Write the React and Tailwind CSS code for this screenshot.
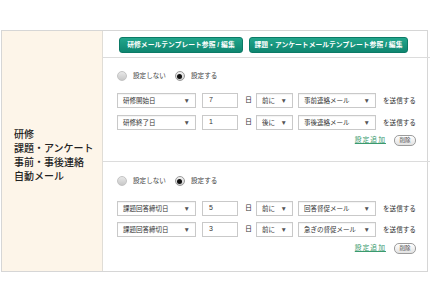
import React from "react";

const font = { fontFamily: '"Liberation Sans", "Noto Sans CJK JP", sans-serif' };

function Radio({ checked }) {
  return checked ? (
    <span className="inline-flex h-[10px] w-[10px] items-center justify-center rounded-full border border-[#9a9a9a] bg-gradient-to-b from-[#f2f2f2] to-[#cfcfcf]">
      <span className="h-[5px] w-[5px] rounded-full bg-[#111]" />
    </span>
  ) : (
    <span className="inline-block h-[10px] w-[10px] rounded-full border border-[#c4c4c4] bg-gradient-to-b from-[#e8e8e8] to-[#c8c8c8]" />
  );
}

function Select({ label, w }) {
  return (
    <div
      className={`flex h-[15px] shrink-0 items-center justify-between whitespace-nowrap border border-[#c9c9c9] bg-white pl-[5px] pr-[5px] text-[6.5px] text-[#333] shadow-[inset_0_1px_1px_rgba(0,0,0,0.05)] ${w}`}
    >
      <span>{label}</span>
      <span className="text-[6.5px] text-[#555]">▼</span>
    </div>
  );
}

function Row({ a, n, b, c }) {
  return (
    <div className="flex h-[15px] items-center whitespace-nowrap">
      <Select label={a} w="w-[79px]" />
      <div className="ml-[6px] flex h-[15px] w-[36px] shrink-0 items-center border border-[#c9c9c9] bg-white pl-[6px] text-[7px] text-[#333]">
        {n}
      </div>
      <span className="ml-[7px] shrink-0 text-[7px] text-[#333]">日</span>
      <div className="ml-[4px] shrink-0">
        <Select label={b} w="w-[37px]" />
      </div>
      <div className="ml-[5px] shrink-0">
        <Select label={c} w="w-[78px]" />
      </div>
      <span className="ml-[7px] shrink-0 text-[6.6px] text-[#333]">を送信する</span>
    </div>
  );
}

function Section({ pt, g1, g2, g3, h, rows }) {
  return (
    <div className={`flex flex-col overflow-hidden pl-[14px] pr-[16px] ${pt} ${h}`}>
      <div className="flex h-[10px] items-center whitespace-nowrap text-[6.6px] text-[#444]">
        <Radio />
        <span className="ml-[6px]">設定しない</span>
        <span className="ml-[9px] flex"><Radio checked /></span>
        <span className="ml-[6px]">設定する</span>
      </div>
      <div className={g1}>
        <Row {...rows[0]} />
      </div>
      <div className={g2}>
        <Row {...rows[1]} />
      </div>
      <div className={`flex h-[11px] items-center justify-end whitespace-nowrap ${g3}`}>
        <span className="text-[6.8px] tracking-[1px] text-[#3a9a6e] underline underline-offset-[1px]">設定追加</span>
        <span className="ml-[8px] flex h-[11px] w-[22px] items-center justify-center rounded-[5px] border border-[#9c9c9c] bg-gradient-to-b from-white to-[#e2e2e2] text-[5.5px] text-[#444]">
          削除
        </span>
      </div>
    </div>
  );
}

export default function App() {
  return (
    <div className="h-[305px] w-[430px] overflow-hidden bg-white" style={font}>
      <div className="ml-[1px] mt-[30px] flex h-[242px] w-[427px] border border-[#d6d6d6]">
        <div className="flex w-[101px] shrink-0 items-center border-r border-[#e0ddd6] bg-[#fdf5e9] pl-[12px] pt-[9px]">
          <div className="text-[10px] font-medium leading-[14px] text-[#222]">
            研修<br />課題・アンケート<br />事前・事後連絡<br />自動メール
          </div>
        </div>
        <div className="flex flex-1 flex-col">
          <div className="flex h-[27px] shrink-0 items-start gap-[6px] whitespace-nowrap border-b border-[#dcdcdc] pl-[16px] pt-[6px]">
            <span className="flex h-[16px] w-[124px] items-center justify-center rounded-[3px] border border-[#0c7a66] bg-gradient-to-b from-[#22a68c] to-[#0e8670] text-[6.8px] font-bold text-white">
              研修メールテンプレート参照 / 編集
            </span>
            <span className="flex h-[16px] w-[159px] items-center justify-center rounded-[3px] border border-[#0c7a66] bg-gradient-to-b from-[#22a68c] to-[#0e8670] text-[6.8px] font-bold text-white">
              課題・アンケートメールテンプレート参照 / 編集
            </span>
          </div>
          <div className="shrink-0 border-b border-[#dcdcdc]">
            <Section
              pt="pt-[13px]"
              h="h-[103px]"
              g1="mt-[12px]"
              g2="mt-[7px]"
              g3="mt-[5px]"
              rows={[
                { a: "研修開始日", n: "7", b: "前に", c: "事前連絡メール" },
                { a: "研修終了日", n: "1", b: "後に", c: "事後連絡メール" },
              ]}
            />
          </div>
          <Section
            pt="pt-[14px]"
            h="h-[108px]"
            g1="mt-[15px]"
            g2="mt-[6px]"
            g3="mt-[6px]"
            rows={[
              { a: "課題回答締切日", n: "5", b: "前に", c: "回答督促メール" },
              { a: "課題回答締切日", n: "3", b: "前に", c: "急ぎの督促メール" },
            ]}
          />
        </div>
      </div>
    </div>
  );
}
